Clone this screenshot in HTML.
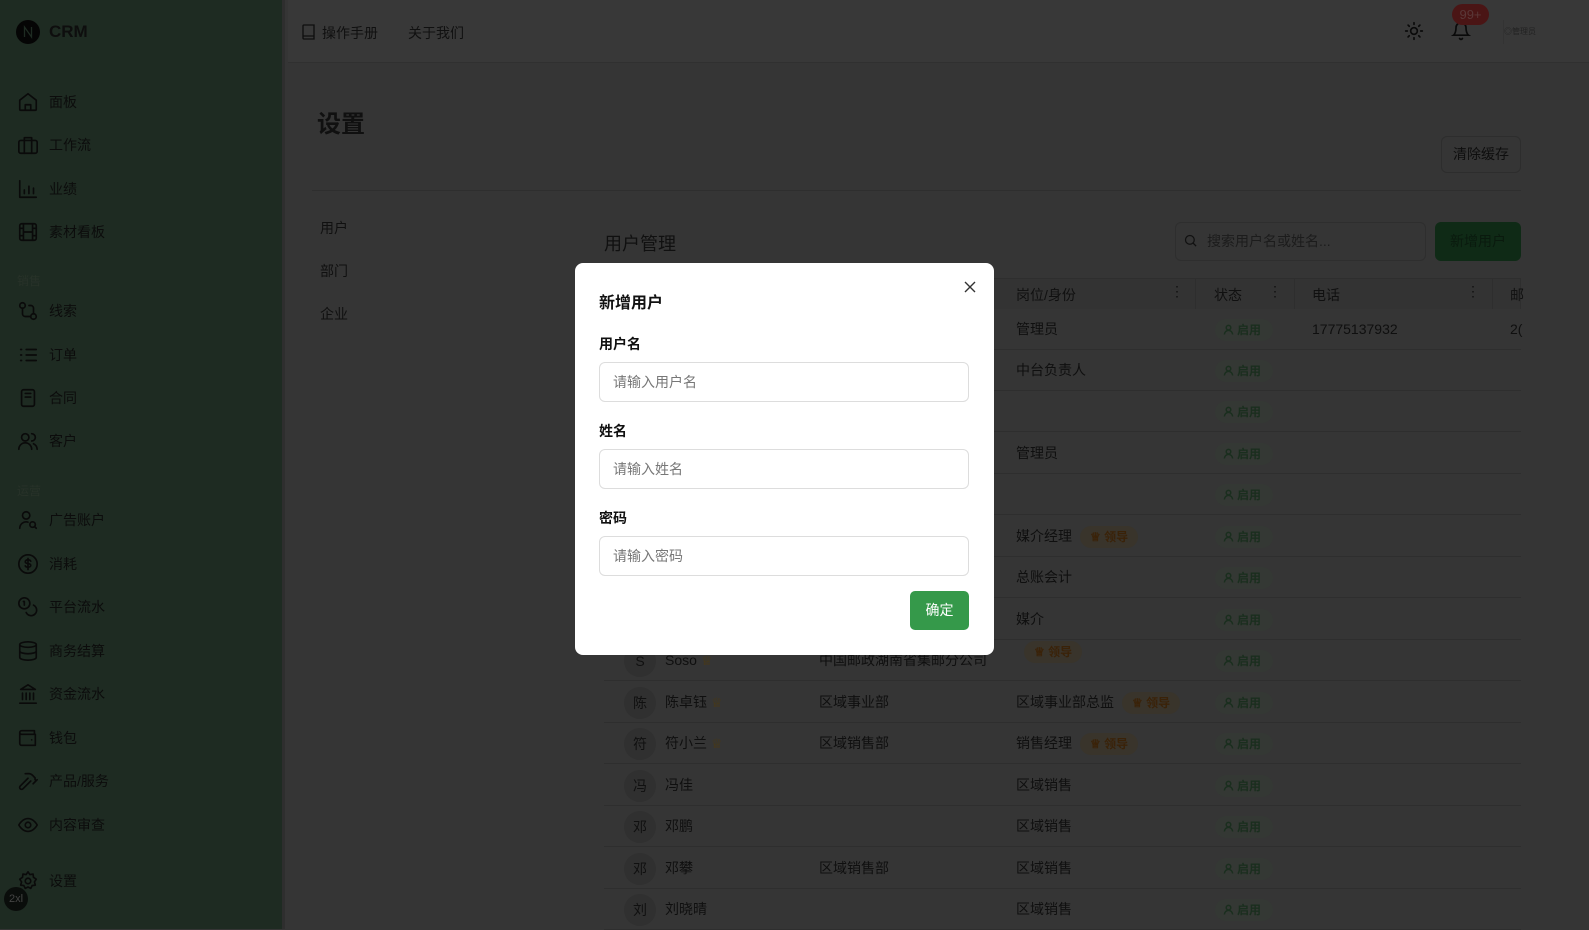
<!DOCTYPE html>
<html><head><meta charset="utf-8"><style>
*{box-sizing:border-box;margin:0;padding:0}
body{width:1589px;height:929px;overflow:hidden;background:#353535;font-family:"Liberation Sans","Noto Sans CJK SC",sans-serif;color:#0e0e0e;position:relative}
.sb{position:absolute;left:0;top:0;width:285px;height:929px;background:#1e2b22;border-right:3px solid #2e2e2e}
.logo{position:absolute;left:16px;top:20px;display:flex;align-items:center;gap:9px;font-weight:bold;font-size:17px}
.it{position:absolute;left:17px;display:flex;align-items:center;gap:10px;font-size:14px;color:#0c0c0c}
.it svg{width:22px;height:22px;fill:none;stroke:#0a0a0a;stroke-width:1.8;stroke-linecap:round;stroke-linejoin:round}
.grp{position:absolute;left:17px;font-size:12px;color:#283229}
.hd{position:absolute;left:288px;top:0;right:0;height:63px;background:#383838;border-bottom:1px solid #303030}
.a{position:absolute;font-size:14px;color:#101010}
.row{position:absolute;left:604px;width:917px;height:41px;border-bottom:1px solid #2e2e2e}
.cell{position:absolute;top:0;height:41px;line-height:41px;font-size:14px;color:#0f0f0f;white-space:nowrap}
.av{position:absolute;left:20px;top:5px;width:32px;height:32px;border-radius:50%;background:#303030;text-align:center;line-height:32px;font-size:14px;color:#101010}
.st{position:absolute;left:611px;top:10px;width:58px;height:22px;border-radius:11px;background:#343834;font-size:12px;line-height:22px;color:#1a2e1e;padding-left:8px;white-space:nowrap;font-weight:bold}
.st svg{width:11px;height:11px;vertical-align:-1px;fill:none;stroke:#1a2e1e;stroke-width:1.6;margin-right:3px}
.ld{display:inline-block;height:22px;line-height:22px;border-radius:11px;background:#39342b;color:#3a2208;font-size:12px;padding:0 10px;margin-left:8px;vertical-align:middle;font-weight:bold}
.cr{color:#4d3a10;font-size:13px}
.modal{position:absolute;left:575px;top:263px;width:419px;height:392px;background:#fff;border-radius:8px}
.lab{position:absolute;left:24px;font-size:14px;font-weight:bold;color:#111}
.inp{position:absolute;left:24px;width:370px;height:40px;border:1px solid #ddd;border-radius:6px;font-size:14px;color:#777;padding-left:13px;line-height:38px}
</style></head><body>
<div class="sb">
<div class="logo"><svg width="24" height="24" viewBox="0 0 24 24"><circle cx="12" cy="12" r="12" fill="#050505"/><path d="M8.5 17V7l7 10V7" stroke="#1e2b22" stroke-width="1.3" fill="none"/></svg>CRM</div>
<div class="it" style="top:91px"><svg viewBox="0 0 24 24"><path d="M3 10l9-7 9 7v10a1 1 0 0 1-1 1H4a1 1 0 0 1-1-1z M9 21v-6h6v6"/></svg>面板</div>
<div class="it" style="top:134px"><svg viewBox="0 0 24 24"><rect x="2" y="7" width="20" height="14" rx="2"/><path d="M8 7V4h8v3M8 7v14M16 7v14"/></svg>工作流</div>
<div class="it" style="top:178px"><svg viewBox="0 0 24 24"><path d="M3 3v18h18M8 17v-4M13 17V9M18 17v-6"/></svg>业绩</div>
<div class="it" style="top:221px"><svg viewBox="0 0 24 24"><rect x="3" y="3" width="18" height="18" rx="2"/><path d="M7 3v18M17 3v18M3 8h4M3 16h4M17 8h4M17 16h4M7 12h10"/></svg>素材看板</div>
<div class="grp" style="top:272px">销售</div>
<div class="it" style="top:300px"><svg viewBox="0 0 24 24"><circle cx="6" cy="6" r="3"/><circle cx="18" cy="18" r="3"/><path d="M6 9v6a3 3 0 0 0 3 3h6M18 15V9a3 3 0 0 0-3-3h-2"/></svg>线索</div>
<div class="it" style="top:344px"><svg viewBox="0 0 24 24"><path d="M10 6h11M10 12h11M10 18h11M4 6h1M4 12h1M4 18h1"/></svg>订单</div>
<div class="it" style="top:387px"><svg viewBox="0 0 24 24"><rect x="5" y="3" width="14" height="18" rx="2"/><path d="M9 7h6M9 11h6"/></svg>合同</div>
<div class="it" style="top:430px"><svg viewBox="0 0 24 24"><circle cx="9" cy="8" r="4"/><path d="M2 21a7 7 0 0 1 14 0M16 4a4 4 0 0 1 0 8M22 21a7 7 0 0 0-4-6"/></svg>客户</div>
<div class="grp" style="top:482px">运营</div>
<div class="it" style="top:509px"><svg viewBox="0 0 24 24"><circle cx="10" cy="7" r="4"/><path d="M3 21a7 7 0 0 1 9-6.7"/><circle cx="17" cy="17" r="3"/><path d="M19 19l2 2"/></svg>广告账户</div>
<div class="it" style="top:553px"><svg viewBox="0 0 24 24"><circle cx="12" cy="12" r="10"/><path d="M15 9a3 2 0 0 0-3-1.5c-2 0-3 1-3 2s1 1.7 3 2 3 1 3 2-1 2-3 2a3 2 0 0 1-3-1.5M12 6v12"/></svg>消耗</div>
<div class="it" style="top:596px"><svg viewBox="0 0 24 24"><circle cx="8" cy="8" r="6"/><path d="M18 10a6 6 0 1 1-8 8M7 6h1v4"/></svg>平台流水</div>
<div class="it" style="top:640px"><svg viewBox="0 0 24 24"><ellipse cx="12" cy="5" rx="9" ry="3"/><path d="M3 5v14c0 1.7 4 3 9 3s9-1.3 9-3V5M3 12c0 1.7 4 3 9 3s9-1.3 9-3"/></svg>商务结算</div>
<div class="it" style="top:683px"><svg viewBox="0 0 24 24"><path d="M3 22h18M6 18v-7M10 18v-7M14 18v-7M18 18v-7M12 2l8 5H4z"/></svg>资金流水</div>
<div class="it" style="top:727px"><svg viewBox="0 0 24 24"><path d="M19 7V4H5a2 2 0 0 0 0 4h15v12H5a2 2 0 0 1-2-2V6M16 14h.01"/></svg>钱包</div>
<div class="it" style="top:770px"><svg viewBox="0 0 24 24"><path d="M15 12l-8.5 8.5a2.1 2.1 0 0 1-3-3L12 9M17.6 15L22 10.6M20.9 11.7l-1.2-1.2 0-1.9-2.9-3a6 6 0 0 0-4.2-1.7L9 4"/></svg>产品/服务</div>
<div class="it" style="top:814px"><svg viewBox="0 0 24 24"><path d="M2 12s3.5-7 10-7 10 7 10 7-3.5 7-10 7S2 12 2 12z"/><circle cx="12" cy="12" r="3"/></svg>内容审查</div>
<div class="it" style="top:870px"><svg viewBox="0 0 24 24"><circle cx="12" cy="12" r="3"/><path d="M12 2l2 3 3.5-.5.5 3.5 3 2-2 3 1 3.5-3.5.5-1.5 3-3-1.5-3 1.5-1.5-3-3.5-.5 1-3.5-2-3 3-2 .5-3.5L10 5z"/></svg>设置</div>
<div style="position:absolute;left:4px;top:887px;width:24px;height:24px;border-radius:50%;background:#0a0d0b;color:#444;font-size:11px;text-align:center;line-height:24px">2xl</div>
</div>
<div class="hd">
<svg style="position:absolute;left:14px;top:24px" width="13" height="16" viewBox="0 0 13 16"><path d="M1 13V2a1 1 0 0 1 1-1h10v14H2a1 1 0 0 1-1-1zM1 12h11" fill="none" stroke="#0e0e0e" stroke-width="1.3"/></svg>
<div class="a" style="left:34px;top:23px">操作手册</div>
<div class="a" style="left:120px;top:23px">关于我们</div>
<svg style="position:absolute;left:1116px;top:21px" width="20" height="20" viewBox="0 0 24 24" fill="none" stroke="#0a0a0a" stroke-width="2" stroke-linecap="round"><circle cx="12" cy="12" r="4"/><path d="M12 2v2M12 20v2M4.9 4.9l1.4 1.4M17.7 17.7l1.4 1.4M2 12h2M20 12h2M4.9 19.1l1.4-1.4M17.7 6.3l1.4-1.4"/></svg>
<svg style="position:absolute;left:1163px;top:20px" width="20" height="22" viewBox="0 0 24 24" fill="none" stroke="#0a0a0a" stroke-width="2" stroke-linecap="round"><path d="M6 8a6 6 0 0 1 12 0c0 7 3 9 3 9H3s3-2 3-9M10.3 21a1.9 1.9 0 0 0 3.4 0"/></svg>
<div style="position:absolute;left:1164px;top:4px;width:37px;height:21px;border-radius:11px;background:#4a1515;color:#5a3838;font-size:13px;text-align:center;line-height:21px">99+</div>
<div style="position:absolute;left:1215px;top:20px;width:1px;height:24px;background:#333"></div>
<div class="a" style="left:1216px;top:26px;font-size:8px;color:#222">◎管理员</div>
</div>
<div class="a" style="left:317px;top:104px;font-size:24px;font-weight:bold">设置</div>
<div style="position:absolute;left:1441px;top:136px;width:80px;height:37px;border:1px solid #2d2d2d;border-radius:6px;font-size:14px;text-align:center;line-height:35px">清除缓存</div>
<div style="position:absolute;left:312px;top:190px;width:1209px;height:1px;background:#2e2e2e"></div>
<div class="a" style="left:320px;top:218px">用户</div>
<div class="a" style="left:320px;top:261px">部门</div>
<div class="a" style="left:320px;top:304px">企业</div>
<div class="a" style="left:604px;top:230px;font-size:18px">用户管理</div>
<div style="position:absolute;left:1175px;top:222px;width:251px;height:39px;border:1px solid #2e2e2e;border-radius:6px;font-size:14px;color:#1c1c1c;line-height:37px;padding-left:31px">搜索用户名或姓名...</div>
<svg style="position:absolute;left:1183px;top:233px" width="15" height="15" viewBox="0 0 24 24" fill="none" stroke="#111" stroke-width="2"><circle cx="11" cy="11" r="7"/><path d="M21 21l-5-5"/></svg>
<div style="position:absolute;left:1435px;top:222px;width:86px;height:39px;border-radius:6px;background:#0f2a16;color:#0a1a0e;font-size:14px;text-align:center;line-height:39px">新增用户</div>
<div style="position:absolute;left:604px;top:278px;width:917px;height:31px;border:1px solid #2e2e2e;border-bottom:none;background:#333"></div>
<div class="a" style="left:1016px;top:285px">岗位/身份</div><div class="a" style="left:1170px;top:283px">⋮</div>
<div class="a" style="left:1214px;top:285px">状态</div><div class="a" style="left:1268px;top:283px">⋮</div>
<div class="a" style="left:1312px;top:285px">电话</div><div class="a" style="left:1466px;top:283px">⋮</div>
<div class="a" style="left:1510px;top:285px">邮</div>
<div style="position:absolute;left:1195px;top:279px;width:1px;height:30px;background:#2e2e2e"></div>
<div style="position:absolute;left:1294px;top:279px;width:1px;height:30px;background:#2e2e2e"></div>
<div style="position:absolute;left:1492px;top:279px;width:1px;height:30px;background:#2e2e2e"></div>

<div class="row" style="top:309px"><div class="cell" style="left:412px">管理员</div><div class="st"><svg viewBox="0 0 12 12"><circle cx="6" cy="4" r="2.5"/><path d="M1.5 11.5a4.5 4.5 0 0 1 9 0"/></svg>启用</div><div class="cell" style="left:708px">17775137932</div><div class="cell" style="left:906px">2(</div></div>
<div class="row" style="top:350px"><div class="cell" style="left:412px">中台负责人</div><div class="st"><svg viewBox="0 0 12 12"><circle cx="6" cy="4" r="2.5"/><path d="M1.5 11.5a4.5 4.5 0 0 1 9 0"/></svg>启用</div></div>
<div class="row" style="top:391px"><div class="st"><svg viewBox="0 0 12 12"><circle cx="6" cy="4" r="2.5"/><path d="M1.5 11.5a4.5 4.5 0 0 1 9 0"/></svg>启用</div></div>
<div class="row" style="top:433px"><div class="cell" style="left:412px">管理员</div><div class="st"><svg viewBox="0 0 12 12"><circle cx="6" cy="4" r="2.5"/><path d="M1.5 11.5a4.5 4.5 0 0 1 9 0"/></svg>启用</div></div>
<div class="row" style="top:474px"><div class="st"><svg viewBox="0 0 12 12"><circle cx="6" cy="4" r="2.5"/><path d="M1.5 11.5a4.5 4.5 0 0 1 9 0"/></svg>启用</div></div>
<div class="row" style="top:516px"><div class="cell" style="left:412px">媒介经理<span class="ld">♕ 领导</span></div><div class="st"><svg viewBox="0 0 12 12"><circle cx="6" cy="4" r="2.5"/><path d="M1.5 11.5a4.5 4.5 0 0 1 9 0"/></svg>启用</div></div>
<div class="row" style="top:557px"><div class="cell" style="left:412px">总账会计</div><div class="st"><svg viewBox="0 0 12 12"><circle cx="6" cy="4" r="2.5"/><path d="M1.5 11.5a4.5 4.5 0 0 1 9 0"/></svg>启用</div></div>
<div class="row" style="top:599px"><div class="cell" style="left:412px">媒介</div><div class="st"><svg viewBox="0 0 12 12"><circle cx="6" cy="4" r="2.5"/><path d="M1.5 11.5a4.5 4.5 0 0 1 9 0"/></svg>启用</div></div>
<div class="row" style="top:640px"><div class="av">S</div><div class="cell" style="left:61px">Soso <span class="cr">♕</span></div><div class="cell" style="left:215px">中国邮政湖南省集邮分公司</div><div class="cell" style="left:412px;top:-9px"><span class="ld">♕ 领导</span></div><div class="st"><svg viewBox="0 0 12 12"><circle cx="6" cy="4" r="2.5"/><path d="M1.5 11.5a4.5 4.5 0 0 1 9 0"/></svg>启用</div></div>
<div class="row" style="top:682px"><div class="av">陈</div><div class="cell" style="left:61px">陈卓钰 <span class="cr">♕</span></div><div class="cell" style="left:215px">区域事业部</div><div class="cell" style="left:412px">区域事业部总监<span class="ld">♕ 领导</span></div><div class="st"><svg viewBox="0 0 12 12"><circle cx="6" cy="4" r="2.5"/><path d="M1.5 11.5a4.5 4.5 0 0 1 9 0"/></svg>启用</div></div>
<div class="row" style="top:723px"><div class="av">符</div><div class="cell" style="left:61px">符小兰 <span class="cr">♕</span></div><div class="cell" style="left:215px">区域销售部</div><div class="cell" style="left:412px">销售经理<span class="ld">♕ 领导</span></div><div class="st"><svg viewBox="0 0 12 12"><circle cx="6" cy="4" r="2.5"/><path d="M1.5 11.5a4.5 4.5 0 0 1 9 0"/></svg>启用</div></div>
<div class="row" style="top:765px"><div class="av">冯</div><div class="cell" style="left:61px">冯佳</div><div class="cell" style="left:412px">区域销售</div><div class="st"><svg viewBox="0 0 12 12"><circle cx="6" cy="4" r="2.5"/><path d="M1.5 11.5a4.5 4.5 0 0 1 9 0"/></svg>启用</div></div>
<div class="row" style="top:806px"><div class="av">邓</div><div class="cell" style="left:61px">邓鹏</div><div class="cell" style="left:412px">区域销售</div><div class="st"><svg viewBox="0 0 12 12"><circle cx="6" cy="4" r="2.5"/><path d="M1.5 11.5a4.5 4.5 0 0 1 9 0"/></svg>启用</div></div>
<div class="row" style="top:848px"><div class="av">邓</div><div class="cell" style="left:61px">邓攀</div><div class="cell" style="left:215px">区域销售部</div><div class="cell" style="left:412px">区域销售</div><div class="st"><svg viewBox="0 0 12 12"><circle cx="6" cy="4" r="2.5"/><path d="M1.5 11.5a4.5 4.5 0 0 1 9 0"/></svg>启用</div></div>
<div class="row" style="top:889px"><div class="av">刘</div><div class="cell" style="left:61px">刘晓晴</div><div class="cell" style="left:412px">区域销售</div><div class="st"><svg viewBox="0 0 12 12"><circle cx="6" cy="4" r="2.5"/><path d="M1.5 11.5a4.5 4.5 0 0 1 9 0"/></svg>启用</div></div>

<div class="modal">
<div style="position:absolute;left:24px;top:26px;font-size:16px;font-weight:bold;color:#111">新增用户</div>
<svg style="position:absolute;left:389px;top:18px" width="12" height="12" viewBox="0 0 12 12"><path d="M1 1l10 10M11 1L1 11" stroke="#333" stroke-width="1.4"/></svg>
<div class="lab" style="top:71px">用户名</div>
<div class="inp" style="top:99px">请输入用户名</div>
<div class="lab" style="top:158px">姓名</div>
<div class="inp" style="top:186px">请输入姓名</div>
<div class="lab" style="top:245px">密码</div>
<div class="inp" style="top:273px">请输入密码</div>
<div style="position:absolute;left:335px;top:328px;width:59px;height:39px;border-radius:5px;background:#35994a;color:#fff;font-size:14px;text-align:center;line-height:39px">确定</div>
</div>
</body></html>
